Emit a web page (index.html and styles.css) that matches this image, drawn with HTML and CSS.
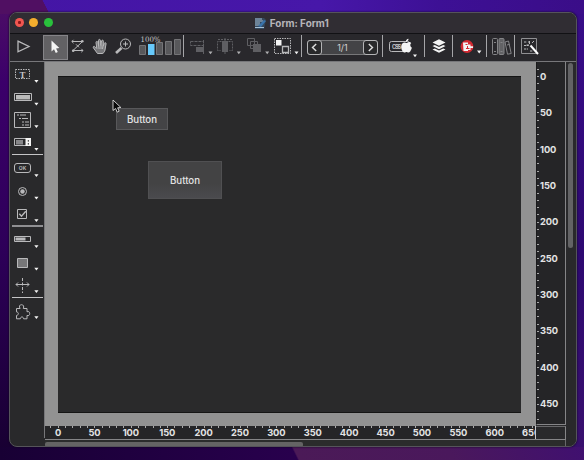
FILE: index.html
```html
<!DOCTYPE html>
<html lang="en">
<head>
<meta charset="utf-8">
<title>Form: Form1</title>
<link rel="stylesheet" href="styles.css">
</head>
<body>
<main class="window">
  <header class="titlebar">
    <div class="lights"><i class="light close"></i><i class="light minimize"></i><i class="light expand"></i></div>
    <div class="title">
      <svg width="13" height="13" viewBox="0 0 13 13"><path d="M1 1h9l2 2-2 9H1z" fill="#34485d"/><path d="M1 2h7M1 4h8M1 6h5M1 8h7M1 10.500h9" stroke="#a6bfd4" stroke-width="1"/><path d="M4 9l6-6 2 1-5 6z" fill="#3a73aa"/></svg>
      <span>Form: Form1</span>
    </div>
  </header>
  <nav class="toolbar">
    <svg class="ico" width="33" height="27" viewBox="10 34 33 27"><path d="M18 41.200L29 46.500 18 51.800z" stroke-width="1.300"/></svg>
    <svg class="ico selected" width="25" height="25" viewBox="43 35 25 25"><path class="white" d="M51.500 40.500v11l2.500-2.200 1.800 3.700 2-1-1.700-3.600 3.300-.3z"/></svg>
    <svg class="ico" width="20" height="27" viewBox="68 34 20 27"><path d="M72 41.500h10.500L73 50.500h10"/><path d="M73.500 39.800l-1.700 1.700 1.700 1.700M81.300 48.800l1.700 1.700-1.700 1.700M76 44.300l3 3"/><circle class="fill" cx="82.300" cy="41.300" r="1.300"/><circle class="fill" cx="73.200" cy="50.700" r="1.300"/></svg>
    <svg class="ico" width="23" height="27" viewBox="88 34 23 27"><path class="hand" d="M97.500 53.500L93.500 48c-1-1.500.8-2.300 1.800-1l1.500 1.500-.8-6c-.1-1.500 1.700-1.500 2 0l.6 3-.1-5c0-1.500 1.800-1.500 2 0l.3 4.800.7-4.300c.3-1.300 2-1 1.900.3l-.3 4.800 1.200-2.800c.6-1.200 2-.6 1.700.7L105 50c-.5 2-1.500 3.500-3 3.500z"/><path d="M98.600 45l.5 4M101 45v4M103 46l-.5 3"/></svg>
    <svg class="ico" width="25" height="27" viewBox="111 34 25 27"><circle cx="125.500" cy="44" r="5"/><path d="M123 44h5M125.500 41.500v5"/><path d="M121.500 48l-5.500 5" stroke-width="2.600"/></svg>
    <svg class="ico" width="47" height="27" viewBox="136 34 47 27"><text class="percent" x="140.500" y="41.500" textLength="20" lengthAdjust="spacingAndGlyphs">100%</text><path class="bar" d="M139.500 45.500h6v9h-6zM156.500 42.500h6v12h-6zM165.500 41.500h6v13h-6zM174.500 39.500h6v15h-6z"/><path class="bar-on" d="M148 44h6.500v11H148z"/></svg>
    <i class="sep"></i>
    <svg class="ico dim" width="29" height="27" viewBox="185 34 29 27"><path d="M190.500 41.500h13v4h-13zM203.500 40v14" stroke-dasharray="3 1"/><path class="fill" d="M196 47h8v5h-8z"/><path class="arrow" d="M208.500 51.500h4l-2 2.700z"/></svg>
    <svg class="ico dim" width="28" height="27" viewBox="214 34 28 27"><path d="M221.500 41.500h-4v9h3M228.500 41.500h4v9h-3M218 39.500h14" stroke-dasharray="2 1"/><path class="fill" d="M222 41h6v11h-6z"/><path d="M225 38v16"/><path class="arrow" d="M236.800 51.500h4l-2 2.700z"/></svg>
    <svg class="ico dim" width="28" height="27" viewBox="242 34 28 27"><path d="M247.500 38.500h7v7h-7zM250.500 41.500h7v7h-7z"/><path class="fill" d="M253 44h8v8h-8z"/><path class="arrow" d="M265.200 51.500h4l-2 2.700z"/></svg>
    <svg class="ico" width="31" height="27" viewBox="270 34 31 27"><path d="M274.500 38.500h16v15h-16z" stroke-dasharray="1.500 1"/><path class="white" d="M276 40h5.500v5.500H276z"/><path d="M282.500 46.500h6v6h-6z" stroke-width="1.300"/><path class="arrow" d="M294.500 51.500h4l-2 2.700z"/></svg>
    <i class="sep"></i>
    <div class="pager">
      <button class="page"><svg width="7" height="9" viewBox="0 0 7 9"><path d="M5.200 1L1.500 4.500 5.200 8"/></svg></button>
      <span class="count">1/1</span>
      <button class="page"><svg width="7" height="9" viewBox="0 0 7 9"><path d="M1.800 1l3.700 3.500L1.800 8"/></svg></button>
    </div>
    <i class="sep"></i>
    <svg class="ico" width="40" height="27" viewBox="384 34 40 27"><rect x="389.500" y="41.500" width="20" height="10" rx="2"/><text class="css" x="392" y="49" textLength="9">CSS</text><path class="apple" d="M407.500 42.500c1.500-1 3-.5 3.800.6-1.600 1-1.300 3.700.6 4.600-.8 3-2.700 5.600-4.200 4.700-.9-.4-1.500-.4-2.400 0-2 .9-4.300-3-4.100-6 .2-3.300 3-4.600 4.700-3.500.6.300 1 .1 1.600-.4zM405.800 41.700c0-1.700 1.200-2.900 2.700-3 .1 1.600-1.100 3-2.700 3z"/><path class="arrow" d="M413 54.500h4l-2 2.700z"/></svg>
    <i class="sep"></i>
    <svg class="ico" width="26" height="27" viewBox="426 34 26 27"><path class="white" d="M432.500 42.500l6.500-3.300 6.500 3.300-6.500 3.200zM432.500 46l2.300-1.100 4.200 2 4.200-2 2.300 1.100-6.500 3.300zM432.500 49.500l2.300-1.100 4.200 2 4.200-2 2.300 1.100-6.500 3.300z"/></svg>
    <i class="sep"></i>
    <svg class="ico" width="32" height="27" viewBox="454 34 32 27"><circle cx="467" cy="46.500" r="6.400" fill="#d32a32" stroke="none"/><path class="white" d="M463 42.500h5v2h2.500v1.800H473v1.800h-2.500v2H468v1h-4.500z"/><path d="M465.500 44.500h2M466 48.500h3.500M467.500 46v3" stroke="#d32a32"/><path class="arrow" d="M477 50.500h4.400l-2.200 2.900z"/></svg>
    <i class="sep"></i>
    <svg class="ico grey" width="26" height="27" viewBox="488 34 26 27"><rect x="492.500" y="38.500" width="5" height="16" rx="1"/><rect x="499" y="38.500" width="5" height="16" rx="1" fill="#626265"/><path d="M505 42l3.500-1 2.700 12.500-3.700.7zM494 42.500h2M494 51.500h2M500.500 42.500h2M500.500 51.500h2M507 45l2.500-.6"/></svg>
    <i class="sep"></i>
    <svg class="ico" width="32" height="27" viewBox="517 34 32 27"><path d="M522.500 38.500h15v15h-15z" stroke="#909093"/><path d="M525 42h3M529 42h2M525 45.500h5M525 49h4M531 51h3" stroke-dasharray="2 .7"/><path d="M531.500 45.500l7.500 8.500" stroke="#fff" stroke-width="2"/><path d="M530.500 41v3M527.500 45h2.500M535 41l-2 2"/></svg>
  </nav>
  <div class="workspace">
    <aside class="palette">
      <svg class="ico" width="34" height="23" viewBox="10 62 34 23"><path d="M15.500 69.500h14v9h-14z" stroke-dasharray="1.500 1"/><text class="letter" x="22.500" y="77.500" text-anchor="middle">T</text><path class="arrow" d="M34.300 80h4.200l-2.100 2.800z"/></svg>
      <svg class="ico" width="34" height="22" viewBox="10 85 34 22"><path d="M14.500 93.500h17v7h-17z"/><path d="M16 95h14v4.500H16z" fill="#bbb" stroke="none"/><path class="arrow" d="M34.300 102.700h4.200l-2.100 2.800z"/></svg>
      <svg class="ico" width="34" height="24" viewBox="10 107 34 24"><path d="M14.500 112.500h16v15h-16z"/><path d="M17 115h2M20 115h6M19 118.500h2M22 118.500h6M22 122h2M25 122h4M22 125h2M25 125h4"/><path class="arrow" d="M34.300 125.200h4.200l-2.100 2.800z"/></svg>
      <svg class="ico" width="34" height="23" viewBox="10 131 34 23"><path d="M14.500 138.500h16v7h-16z"/><path class="fill" d="M16 140h7v4.500h-7z" opacity=".65"/><path class="white" d="M25.500 138H31v8h-5.500z"/><path d="M28.300 140v1.700M28.300 143v1.700" stroke="#333"/><path class="arrow" d="M34.300 148h4.200l-2.100 2.800z"/></svg>
      <i class="rule"></i>
      <svg class="ico" width="34" height="25" viewBox="10 155 34 25"><rect x="14.500" y="163.500" width="16" height="9" rx="2.500"/><text class="ok" x="22.500" y="170" text-anchor="middle">OK</text><path class="arrow" d="M34.300 174.200h4.200l-2.100 2.800z"/></svg>
      <svg class="ico" width="34" height="22" viewBox="10 180 34 22"><circle cx="22.500" cy="191.500" r="4"/><circle class="fill" cx="22.500" cy="191.500" r="2.200"/><path class="arrow" d="M34.300 196.700h4.200l-2.100 2.800z"/></svg>
      <svg class="ico" width="34" height="23" viewBox="10 202 34 23"><path d="M17.500 209.500h9v9h-9z"/><path d="M19.300 213.700l2.200 2.500 4.300-5" stroke-width="1.400"/><path class="arrow" d="M34.300 219.200h4.200l-2.100 2.800z"/></svg>
      <i class="rule thick"></i>
      <svg class="ico" width="34" height="22" viewBox="10 227 34 22"><path d="M14.500 236.500h16v5h-16z"/><path class="fill" d="M15.500 237.500h10v3h-10z"/><path class="arrow" d="M34.300 245.200h4.200l-2.100 2.800z"/></svg>
      <svg class="ico" width="34" height="24" viewBox="10 249 34 24"><path d="M17.500 258.500h10v9h-10z" fill="#777779"/><path class="arrow" d="M34.300 267.800h4.200l-2.100 2.800z"/></svg>
      <svg class="ico" width="34" height="24" viewBox="10 273 34 24"><path d="M16 284.500h13M18 282.500l-2 2 2 2M27 282.500l2 2-2 2"/><path d="M22.500 278v15" stroke-dasharray="3 1.500"/><path class="arrow" d="M34.300 290.300h4.200l-2.100 2.800z"/></svg>
      <i class="rule"></i>
      <svg class="ico" width="34" height="26" viewBox="10 298 34 26"><path d="M16.500 308.500h3.600c-1.400-2.200-.5-3.800 1.400-3.800s2.800 1.700 1.800 3.800H27v3.300c2-.7 2.700.3 2.700 1.800s-1 2.600-2.700 1.800v3.400h-3.400c-.2-2.500-3-2.500-3.300 0h-3.800v-3.300c2.500-.5 2.500-3.300 0-3.600z"/><path class="arrow" d="M34.300 316.300h4.200l-2.100 2.800z"/></svg>
    </aside>
    <section class="editor">
      <div class="pane">
        <div class="canvas">
          <div class="form">
            <button class="widget first">Button</button>
            <button class="widget second">Button</button>
            <svg class="pointer" width="11" height="15" viewBox="0 0 11 15"><path d="M1 1v10.500l2.600-2 1.600 3.700 2-1-1.600-3.400 3.300-.3z" fill="#080808" stroke="#ddd" stroke-width=".9"/></svg>
          </div>
        </div>
        <div class="ruler vertical">
          <div class="labels"><span>0</span><span>50</span><span>100</span><span>150</span><span>200</span><span>250</span><span>300</span><span>350</span><span>400</span><span>450</span></div>
        </div>
      </div>
      <div class="bottom">
        <div class="ruler horizontal">
          <div class="labels"><span>0</span><span>50</span><span>100</span><span>150</span><span>200</span><span>250</span><span>300</span><span>350</span><span>400</span><span>450</span><span>500</span><span>550</span><span>600</span><span>650</span></div>
        </div>
        <div class="corner"></div>
      </div>
      <div class="hscroll"><i></i></div>
    </section>
    <div class="vscroll"><i></i></div>
  </div>
</main>
</body>
</html>
```

FILE: styles.css
```css
* { box-sizing: border-box; }
body {
  margin: 0;
  width: 584px;
  height: 460px;
  overflow: hidden;
  padding: 12px 7px 0 9px;
  font-family: Inter, "Liberation Sans", sans-serif;
  background:
    linear-gradient(64deg, transparent 14%, #4b1a57 14.5%, #4a185c 60%, #401070) 250px 447px / 334px 13px no-repeat,
    linear-gradient(90deg, #180034, #28004d 50%, #28004d) 0 447px / 584px 13px no-repeat,
    linear-gradient(63deg, #500f62 78%, transparent 79%) 0 0 / 56px 14px no-repeat,
    linear-gradient(90deg, #4415a5, #4717a9 55%, #3d1095 75%, #3a0d88) 0 0 / 584px 14px no-repeat,
    linear-gradient(180deg, #4d0e66, #3b006a 18%, #2d0058 55%, #170030) 0 0 / 20px 460px no-repeat,
    linear-gradient(180deg, #380d89, #2d0871 55%, #39106d);
}
i { display: block; }
button { font: inherit; padding: 0; margin: 0; }
.window {
  width: 568px;
  height: 435px;
  display: flex;
  flex-direction: column;
  overflow: hidden;
  background: #29292b;
  border: 1px solid #55545a;
  border-radius: 8px;
  box-shadow: 0 0 2px #0d0618;
}
.titlebar {
  flex: 0 0 21px;
  display: flex;
  align-items: center;
  justify-content: center;
  position: relative;
  background: #302d33;
  border-bottom: 1px solid #111114;
}
.lights { position: absolute; left: 4.500px; top: 5px; display: flex; gap: 5.500px; }
.light { width: 9px; height: 9px; border-radius: 50%; }
.close { background: radial-gradient(circle, #8b1719 0 1.200px, #f25650 2px); }
.minimize { background: #f4ae2e; }
.expand { background: #29c13c; }
.title {
  display: flex;
  align-items: center;
  gap: 2.500px;
  margin-left: -3px;
  color: #b7b5ba;
  font-size: 9.900px;
  font-weight: 700;
  white-space: nowrap;
}
.toolbar {
  flex: 0 0 28px;
  display: flex;
  background: #29282c;
  border-bottom: 1px solid #77777a;
}
.ico { flex: none; display: block; fill: none; stroke: #b9b9bb; stroke-width: 1; }
.selected { margin-top: 1px; background: #626164; outline: 1px solid #858488; outline-offset: -1px; }
.fill { fill: #b9b9bb; stroke: none; }
.white, .arrow, .apple { fill: #f4f4f4; stroke: none; }
.hand { fill: #77777a; }
.bar { fill: #58585b; stroke: #747477; }
.bar-on { fill: #67c9fb; stroke: none; }
.ico text { fill: #c4c4c6; stroke: none; }
.percent { font: 7.500px "DejaVu Serif", serif; }
.css { font: 700 5.500px Inter, sans-serif; }
.ok { font: 600 5px Inter, sans-serif; }
.letter { font: 700 9px "Liberation Serif", serif; }
.dim { stroke: #5f5f63; }
.dim .fill { fill: #5f5f63; }
.dim .arrow { fill: #b0b0b2; }
.grey { stroke: #858588; }
.sep { flex: 0 0 1px; height: 22px; margin: 1px 1px 0 0; background: #a5a5a8; }
.pager {
  flex: none;
  display: flex;
  width: 71px;
  height: 15px;
  margin: 6px 4px 0;
  background: #434346;
  border: 1px solid #777779;
  border-radius: 3px;
}
.page {
  flex: 0 0 15px;
  width: 15px;
  height: 15px;
  margin: -1px;
  display: grid;
  place-items: center;
  border: 1px solid #b4b4b6;
  border-radius: 3px;
  background: #29292b;
}
.page svg { fill: none; stroke: #ddd; stroke-width: 1.400; }
.count { flex: 1; text-align: center; color: #d2d2d3; font-size: 9px; line-height: 14px; }
.workspace { flex: 1; display: flex; min-height: 0; }
.palette {
  flex: 0 0 35px;
  border-right: 1px solid #77777a;
  height: 376px;
}
.rule { height: 1px; margin: 0 1px 0 2px; background: #c5c5c7; }
.thick { height: 2px; background: #8f8f92; }
.editor { flex: 0 0 521px; display: flex; flex-direction: column; }
.pane { flex: 0 0 364px; display: flex; }
.canvas { flex: 0 0 491px; padding: 14px 15px 13px 13px; background: #929292; }
.form { height: 337px; position: relative; background: #2a2a2b; border-top: 1px solid #151515; border-bottom: 1px solid #151515; }
.widget {
  position: absolute;
  border: 1px solid #58585a;
  background: #444446;
  color: #e3e3e4;
  font-size: 9.700px;
  font-weight: 500;
}
.first { left: 58px; top: 31px; width: 52px; height: 22px; }
.second { left: 90px; top: 84px; width: 74px; height: 38px; padding-top: 1px; background: linear-gradient(#434344 60%, #4a4a4e); border-color: #505052; }
.pointer { position: absolute; left: 54px; top: 22px; }
.ruler { overflow: hidden; color: #e4e4e5; font-size: 9.300px; font-weight: 700; letter-spacing: -.100px; }
.labels { display: flex; }
.labels span { display: flex; align-items: center; flex: none; }
.vertical {
  width: 30px;
  height: 363px;
  border-right: 1px solid #858587;
  border-bottom: 1px solid #858587;
  border-left: 1px solid #1a1a1b;
  background: repeating-linear-gradient(180deg, #aaa 0 1px, transparent 1px 7.290px) 0 -.700px / 2px 370px no-repeat, #252527;
}
.vertical .labels { flex-direction: column; margin-top: -4px; }
.vertical span { height: 36.450px; padding-left: 3px; }
.vertical span:nth-child(n+6) { position: relative; top: -.400px; }
.bottom { flex: 0 0 12px; display: flex; border-bottom: 1px solid #858587; }
.horizontal {
  width: 491px;
  border-right: 1px solid #cacacb;
  background: repeating-linear-gradient(90deg, #aaa 0 1px, transparent 1px 7.290px) -1.800px 0 / 500px 2px no-repeat, #252527;
}
.horizontal .labels { margin-left: -5.200px; }
.horizontal span { width: 36.400px; height: 13px; justify-content: center; line-height: 12px; }
.corner { flex: 1; border-top: 1px solid #68686a; border-right: 1px solid #858587; }
.hscroll { height: 8px; padding-top: 2px; background: #2b2c2c; border-right: 1px solid #68686a; }
.hscroll i { width: 258px; height: 5px; border-radius: 2px; background: #646464; }
.vscroll { flex: 1; padding: 1px 0 0 2px; background: #29292b; }
.vscroll i { width: 5px; height: 185px; border-radius: 3px; background: #636365; }
```
